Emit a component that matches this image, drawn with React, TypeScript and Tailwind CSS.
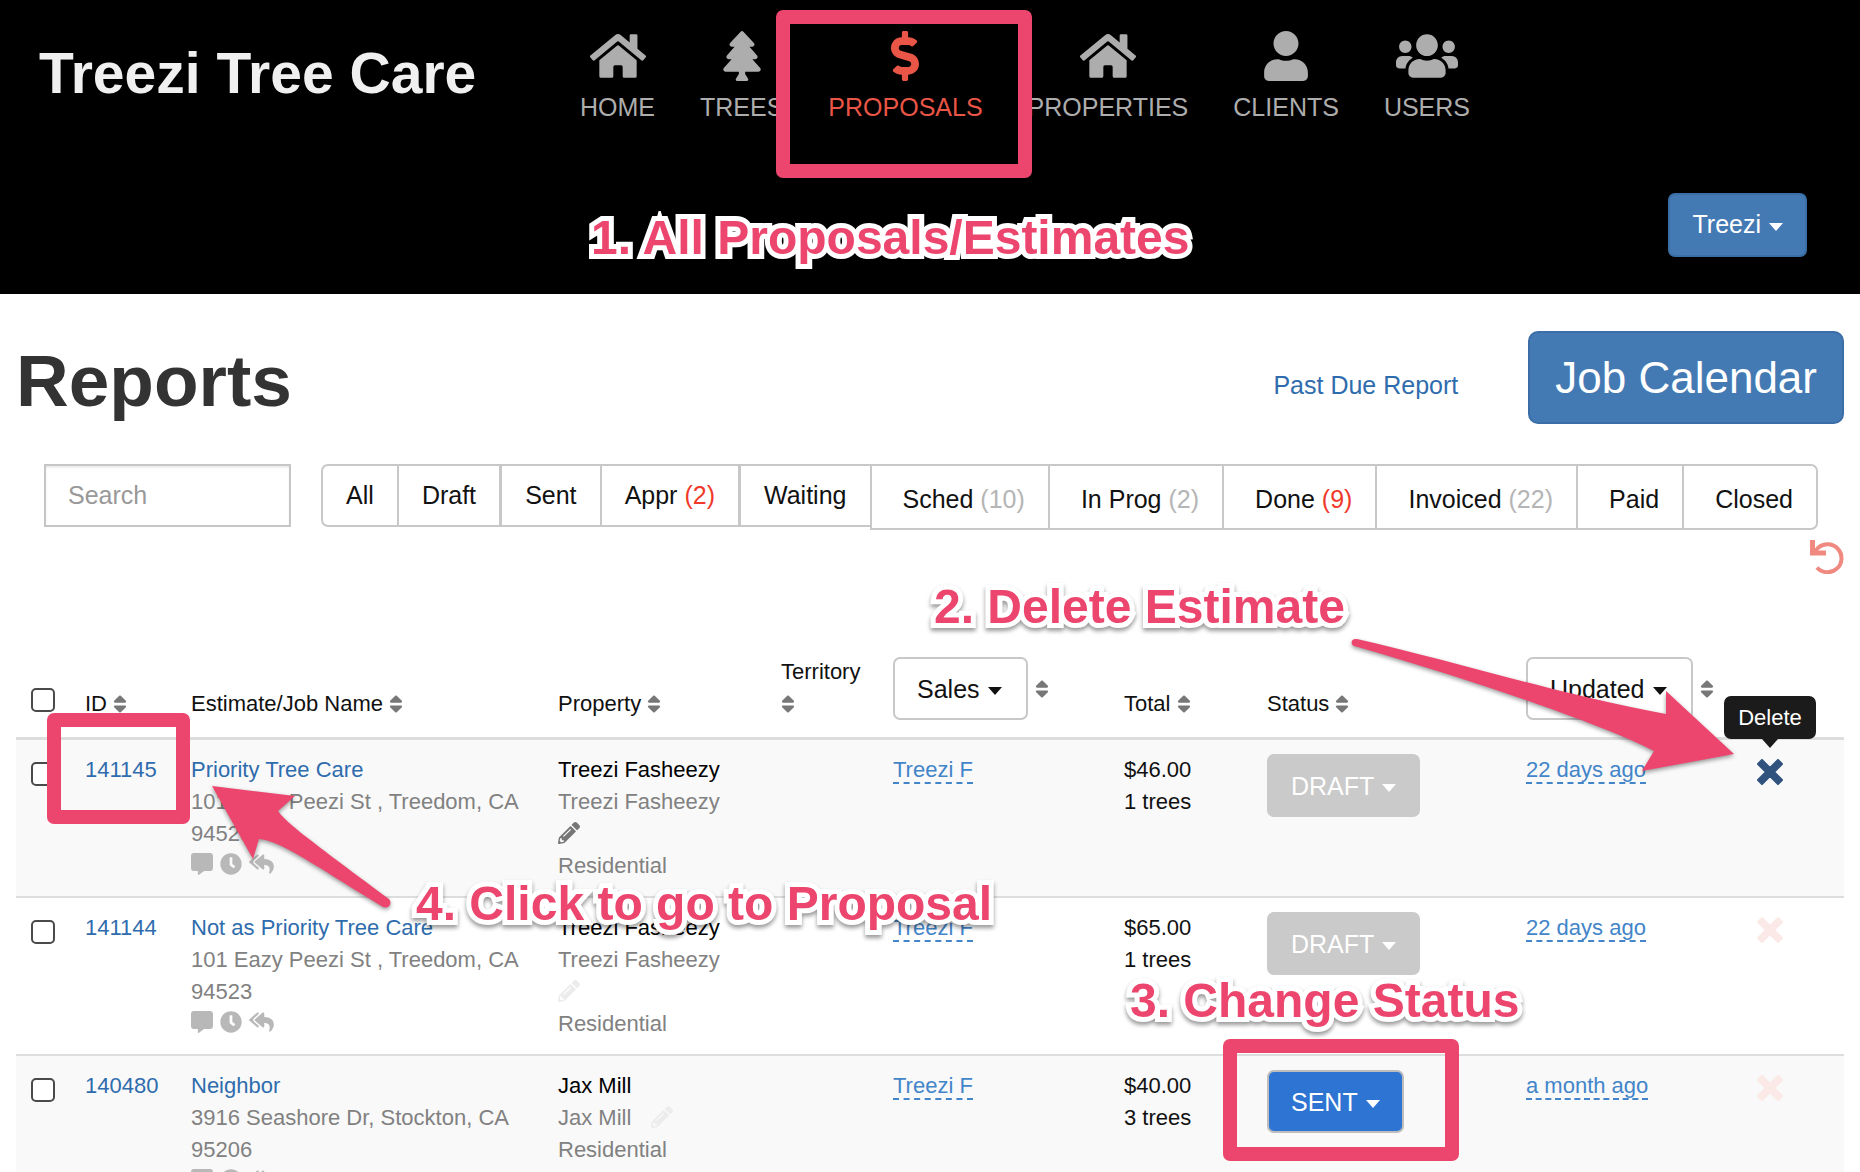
import React, { useState } from 'react';
import {
  FaClock,
  FaCommentAlt,
  FaDollarSign,
  FaHome,
  FaPencilAlt,
  FaReplyAll,
  FaSort,
  FaTree,
  FaUser,
  FaUsers,
} from 'react-icons/fa';

interface Filter {
  name: string;
  count?: number;
  alert?: boolean;
  className: string;
}

interface Proposal {
  id: string;
  name: string;
  address: string;
  client: string;
  editing?: boolean;
  wrapPencil?: boolean;
  total: string;
  trees: string;
  status: 'DRAFT' | 'SENT';
  updated: string;
  tooltip?: boolean;
}

const navItems = [
  { label: 'HOME', icon: <FaHome className="h-[50px] w-[56px]" /> },
  { label: 'TREES', icon: <FaTree className="h-[50px] w-[38px]" /> },
  { label: 'PROPOSALS', icon: <FaDollarSign className="h-[50px] w-[28px]" />, active: true },
  { label: 'PROPERTIES', icon: <FaHome className="h-[50px] w-[56px]" /> },
  { label: 'CLIENTS', icon: <FaUser className="h-[50px] w-[44px]" /> },
  { label: 'USERS', icon: <FaUsers className="h-[50px] w-[62px]" /> },
];

const filters: Filter[] = [
  { name: 'All', className: 'h-[63px] px-[22px] rounded-l-[7px]' },
  { name: 'Draft', className: 'h-[63px] px-[22px] -ml-[2px]' },
  { name: 'Sent', className: 'h-[63px] px-[22px] -ml-px' },
  { name: 'Appr', count: 2, alert: true, className: 'h-[63px] px-[22px] -ml-[2px]' },
  { name: 'Waiting', className: 'h-[63px] px-[22px] -ml-px' },
  { name: 'Sched', count: 10, className: 'h-[66px] pt-1.5 pl-[30px] pr-[22px] -ml-[2px]' },
  { name: 'In Prog', count: 2, className: 'h-[66px] pt-1.5 pl-[30px] pr-[22px] -ml-[2px]' },
  { name: 'Done', count: 9, alert: true, className: 'h-[66px] pt-1.5 pl-[30px] pr-[22px] -ml-[2px]' },
  { name: 'Invoiced', count: 22, className: 'h-[66px] pt-1.5 pl-[30px] pr-[22px] -ml-[2px]' },
  { name: 'Paid', className: 'h-[66px] pt-1.5 pl-[30px] pr-[22px] -ml-[2px]' },
  { name: 'Closed', className: 'h-[66px] pt-1.5 pl-[30px] pr-[22px] -ml-[2px] rounded-r-[7px]' },
];

const proposals: Proposal[] = [
  {
    id: '141145',
    name: 'Priority Tree Care',
    address: '101 Eazy Peezi St , Treedom, CA 94523',
    client: 'Treezi Fasheezy',
    editing: true,
    wrapPencil: true,
    total: '$46.00',
    trees: '1 trees',
    status: 'DRAFT',
    updated: '22 days ago',
    tooltip: true,
  },
  {
    id: '141144',
    name: 'Not as Priority Tree Care',
    address: '101 Eazy Peezi St , Treedom, CA 94523',
    client: 'Treezi Fasheezy',
    wrapPencil: true,
    total: '$65.00',
    trees: '1 trees',
    status: 'DRAFT',
    updated: '22 days ago',
  },
  {
    id: '140480',
    name: 'Neighbor',
    address: '3916 Seashore Dr, Stockton, CA 95206',
    client: 'Jax Mill',
    total: '$40.00',
    trees: '3 trees',
    status: 'SENT',
    updated: 'a month ago',
  },
];

const Caret = () => (
  <span className="ml-2 inline-block border-x-[7px] border-t-[8px] border-x-transparent border-t-current align-middle" />
);

const SortIcon = () => <FaSort className="inline-block h-[22px] w-[14px] align-[-4px] text-[#777]" />;

const Checkbox = ({ label, className }: { label: string; className: string }) => (
  <input
    type="checkbox"
    aria-label={label}
    className={`ml-0.5 block h-6 w-6 appearance-none rounded-[5px] border-2 border-[#4a4a4a] bg-white checked:bg-[#447ab4] ${className}`}
  />
);

const Header = () => (
  <header className="bg-black pb-[37px]">
    <div className="flex items-start">
      <a href="#" className="w-[580px] shrink-0 pt-[45px] pl-[39px] text-[57px] leading-[56px] font-bold text-[#f0f0f0]">
        Treezi Tree Care
      </a>
      <nav className="flex gap-[45px] pt-[31px]">
        {navItems.map((item) => (
          <a
            key={item.label}
            href="#"
            className={`flex flex-col items-center text-[25px] leading-8 ${item.active ? 'text-[#e95546]' : 'text-[#adadad]'}`}
          >
            {item.icon}
            <span className="mt-[10px]">{item.label}</span>
          </a>
        ))}
      </nav>
    </div>
    <div className="mt-[70px] flex justify-end pr-[53px]">
      <button
        aria-haspopup="menu"
        className="h-16 rounded-[7px] border-2 border-[#3b6ea6] bg-[#447ab4] px-[22px] text-[25px] text-white"
      >
        Treezi
        <Caret />
      </button>
    </div>
  </header>
);

const Toolbar = () => {
  const [search, setSearch] = useState('');

  return (
    <div className="mt-10 flex items-start pr-[26px] pl-7">
      <input
        type="text"
        aria-label="Search"
        placeholder="Search"
        value={search}
        onChange={(e) => setSearch(e.target.value)}
        className="h-[63px] w-[247px] shrink-0 border-2 border-[#c6c6c6] px-[22px] text-[25px] shadow-[inset_0_2px_2px_rgba(0,0,0,0.08)] outline-none placeholder:text-[#999]"
      />
      <div className="ml-[30px] flex flex-1 items-start">
        {filters.map((f) => (
          <button
            key={f.name}
            className={`grow border-2 border-[#c8c8c8] bg-white text-[25px] whitespace-nowrap text-[#111] ${f.className}`}
          >
            {f.name}
            {f.count !== undefined && (
              <span className={f.alert ? 'text-[#f0392b]' : 'text-[#b5b5b5]'}> ({f.count})</span>
            )}
          </button>
        ))}
      </div>
    </div>
  );
};

const headButton = 'h-[63px] rounded-[7px] border-2 border-[#c8c8c8] bg-white pr-6 pl-[22px] text-[25px] text-[#111]';

const ProposalRow = ({ row, striped }: { row: Proposal; striped: boolean }) => (
  <tr className={`align-top ${striped ? 'bg-[#f9f9f9]' : 'bg-white'} *:border-b-2 *:border-[#ddd] *:px-[13px] *:py-[14px]`}>
    <td>
      <Checkbox label={`Select ${row.id}`} className="mt-2" />
    </td>
    <td>
      <a href="#" className="text-[#2f6cad]">{row.id}</a>
    </td>
    <td className="text-[#818181]">
      <a href="#" className="block text-[#2f6cad]">{row.name}</a>
      <div className="w-[330px]">{row.address}</div>
      <div className="flex h-8 gap-[7px] pt-[3px] text-[#b8b8b8]">
        <FaCommentAlt className="h-[22px] w-[22px]" />
        <FaClock className="h-[22px] w-[22px]" />
        <FaReplyAll className="h-[22px] w-[25px]" />
      </div>
    </td>
    <td className="text-[#818181]">
      <div className="text-black">{row.client}</div>
      <span>{row.client}</span>
      {row.wrapPencil && <br />}
      <button aria-label="Edit property" className={row.wrapPencil ? '' : 'ml-5'}>
        <FaPencilAlt className={`inline-block h-[22px] w-[22px] align-[-3px] ${row.editing ? 'text-[#777]' : 'text-[#ececec]'}`} />
      </button>
      <div>Residential</div>
    </td>
    <td />
    <td>
      <a href="#" className="border-b-2 border-dashed border-[#4385c9] text-[#4385c9]">Treezi F</a>
    </td>
    <td>
      {row.total}
      <br />
      {row.trees}
    </td>
    <td>
      <button
        aria-haspopup="menu"
        className={`block h-[63px] rounded-[7px] border-2 px-[22px] text-[25px] text-white ${
          row.status === 'SENT' ? 'border-[#bdbdbd] bg-[#2d74d3]' : 'border-[#cacaca] bg-[#cacaca]'
        }`}
      >
        {row.status}
        <Caret />
      </button>
    </td>
    <td>
      <a href="#" className="border-b-2 border-dashed border-[#4385c9] text-[#4385c9]">{row.updated}</a>
    </td>
    <td>
      <div className="relative flex w-[28px] justify-center pt-[5px]">
        <button aria-label={`Delete ${row.id}`}>
          <svg viewBox="0 0 26 26" className={`h-[26px] w-[26px] ${row.tooltip ? 'text-[#30537e]' : 'text-[#fbe9e7]'}`}>
            <path
              d="M5 1L13 9L21 1L25 5L17 13L25 21L21 25L13 17L5 25L1 21L9 13L1 5Z"
              fill="currentColor"
              stroke="currentColor"
              strokeWidth="2"
              strokeLinejoin="round"
            />
          </svg>
        </button>
        {row.tooltip && (
          <div role="tooltip" className="absolute bottom-[46px] flex h-[43px] items-center rounded-[7px] bg-[#1b1b1b] px-[14px] text-white">
            Delete
            <span className="absolute top-full left-1/2 -ml-2 border-x-8 border-t-[9px] border-x-transparent border-t-[#1b1b1b]" />
          </div>
        )}
      </div>
    </td>
  </tr>
);

const ProposalTable = () => (
  <table className="mt-[70px] w-full table-fixed border-separate border-spacing-0 text-[22px] leading-8 text-[#111]">
    <colgroup>
      <col className="w-[56px]" />
      <col className="w-[106px]" />
      <col className="w-[367px]" />
      <col className="w-[223px]" />
      <col className="w-[112px]" />
      <col className="w-[231px]" />
      <col className="w-[143px]" />
      <col className="w-[259px]" />
      <col className="w-[230px]" />
      <col className="w-[101px]" />
    </colgroup>
    <thead>
      <tr className="text-left align-bottom *:border-b-3 *:border-[#ddd] *:px-[13px] *:pt-3 *:pb-[17px] *:font-normal">
        <th>
          <Checkbox label="Select all" className="mb-2" />
        </th>
        <th>ID <SortIcon /></th>
        <th>Estimate/Job Name <SortIcon /></th>
        <th>Property <SortIcon /></th>
        <th>Territory <SortIcon /></th>
        <th>
          <div className="flex items-center gap-[7px]">
            <button aria-haspopup="menu" className={headButton}>Sales<Caret /></button>
            <SortIcon />
          </div>
        </th>
        <th>Total <SortIcon /></th>
        <th>Status <SortIcon /></th>
        <th>
          <div className="flex items-center gap-[7px]">
            <button aria-haspopup="menu" className={headButton}>Updated<Caret /></button>
            <SortIcon />
          </div>
        </th>
        <th aria-label="Actions" />
      </tr>
    </thead>
    <tbody>
      {proposals.map((row, i) => (
        <ProposalRow key={row.id} row={row} striped={i % 2 === 0} />
      ))}
    </tbody>
  </table>
);

const Callout = ({ children, className }: { children: React.ReactNode; className: string }) => (
  <p
    className={`absolute text-[48px] leading-[48px] font-bold whitespace-nowrap text-[#ec466e] drop-shadow-[0_3px_2px_rgba(0,0,0,0.4)] [-webkit-text-stroke:10px_white] [paint-order:stroke_fill] [stroke-linejoin:round] ${className}`}
  >
    {children}
  </p>
);

const Frame = ({ className }: { className: string }) => (
  <div className={`absolute rounded-[7px] border-[14px] border-[#ec466e] ${className}`} />
);

// tutorial marks that float over the page
const Annotations = () => (
  <div className="pointer-events-none absolute inset-0 z-10">
    <Frame className="top-[10px] left-[776px] h-[168px] w-[256px]" />
    <Frame className="top-[713px] left-[47px] h-[111px] w-[143px]" />
    <Frame className="top-[1039px] left-[1223px] h-[122px] w-[236px]" />
    <svg
      viewBox="0 0 200 140"
      className="absolute top-[780px] left-[200px] h-[140px] w-[200px] drop-shadow-[0_2px_2px_rgba(0,0,0,0.4)]"
    >
      <path
        d="M12 6L95 16L78 31C86 42 100 53 189 119C193 124 188 129 183 127C105 79 80 61 59 59L53 79Z"
        fill="#ec466e"
      />
    </svg>
    <svg
      viewBox="0 0 400 150"
      className="absolute top-[630px] left-[1340px] h-[150px] w-[400px] drop-shadow-[0_2px_2px_rgba(0,0,0,0.4)]"
    >
      <path
        d="M17 9C110 30 225 66 326 84L326 61L394 124L302 141L314 121C270 98 150 55 14 16C10 14 11 8 17 9Z"
        fill="#ec466e"
      />
    </svg>
    <Callout className="top-[214px] left-[591px]">1. All Proposals/Estimates</Callout>
    <Callout className="top-[583px] left-[934px]">2. Delete Estimate</Callout>
    <Callout className="top-[977px] left-[1130px]">3. Change Status</Callout>
    <Callout className="top-[880px] left-[416px]">4. Click to go to Proposal</Callout>
  </div>
);

export default function App() {
  return (
    <div className="relative h-screen overflow-hidden bg-white font-['Liberation_Sans',Arial,sans-serif]">
      <Header />
      <main className="px-4 pt-[37px]">
        <div className="flex items-center">
          <h1 className="pt-1.5 text-[73px] leading-[73px] font-bold text-[#333]">Reports</h1>
          <a href="#" className="mr-[70px] ml-auto pt-4 text-[25px] text-[#2f6cad]">Past Due Report</a>
          <button className="h-[93px] rounded-[10px] border-2 border-[#3b6ea6] bg-[#447ab4] px-[25px] text-[44px] text-white">
            Job Calendar
          </button>
        </div>
        <Toolbar />
        <div className="mt-[10px] flex justify-end">
          <button aria-label="Reset filters" className="text-[#f08a80]">
            <svg viewBox="0 0 34 34" className="h-[34px] w-[34px]" fill="none" stroke="currentColor" strokeWidth="4">
              <path d="M2.5 0V13H16" strokeWidth="5" />
              <path d="M3.5 13L8.5 7.5A14 14 0 1 1 7 27.5" />
            </svg>
          </button>
        </div>
        <ProposalTable />
      </main>
      <Annotations />
    </div>
  );
}
